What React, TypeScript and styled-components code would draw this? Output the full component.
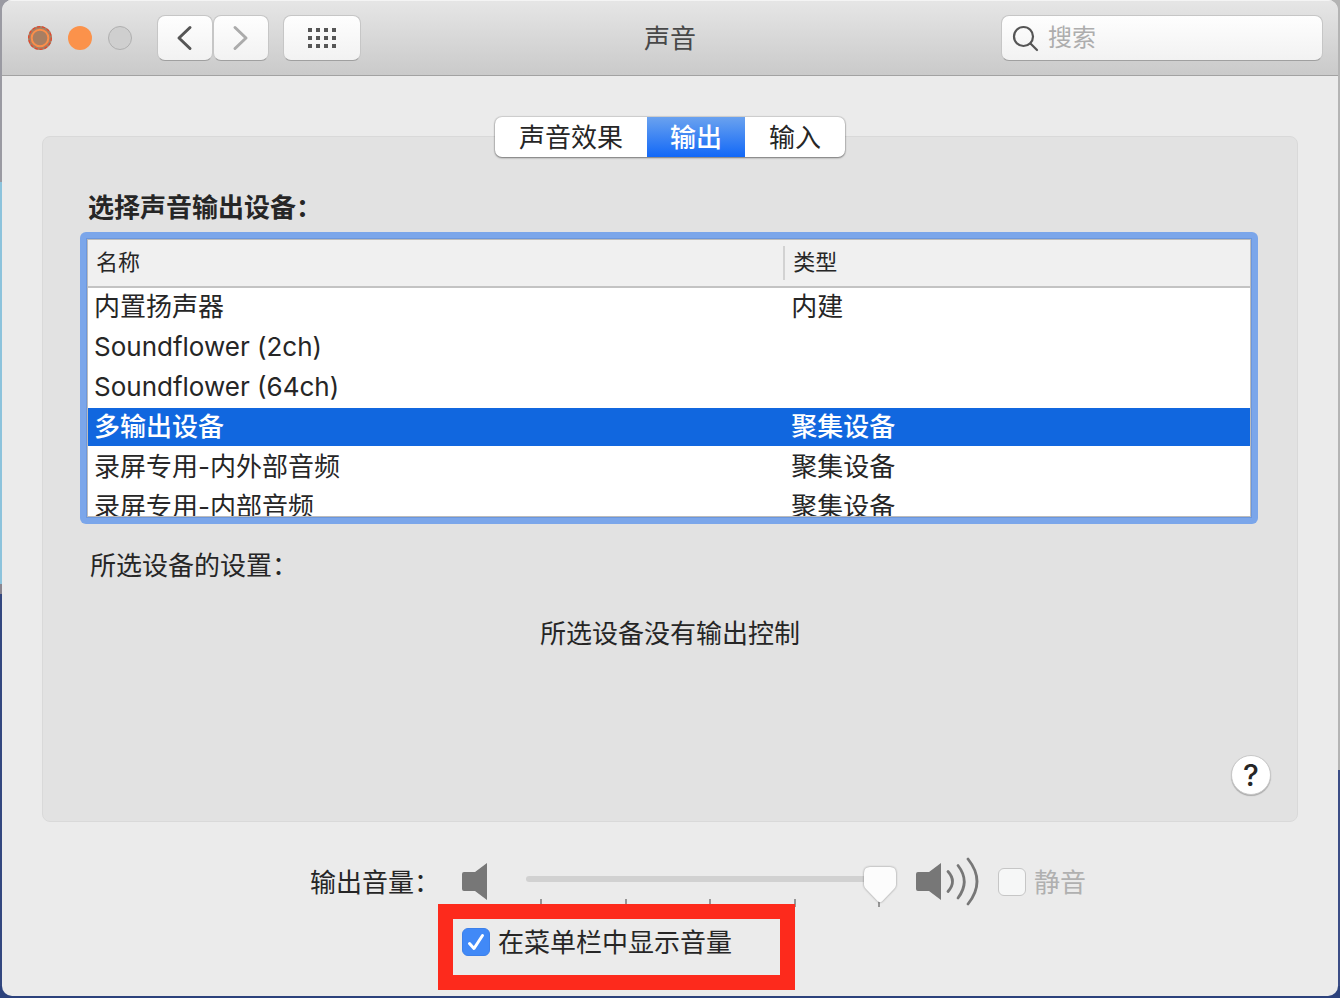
import React, { useState } from 'react';
import styled, { createGlobalStyle, css } from 'styled-components';

const GlobalStyle = createGlobalStyle`
  *, *::before, *::after { box-sizing: border-box; }
  body {
    margin: 0;
    min-height: 100vh;
    color: #262626;
    font-family: Inter, "Noto Sans CJK SC", sans-serif;
    font-size: 26px;
    line-height: 40px;
    background:
      linear-gradient(#9a9aa2 0 182px, #8cc3dc 182px 584px, #8a8690 584px 594px, #33477f 594px) left / 50% 100% no-repeat,
      linear-gradient(#b4b4b4 0 770px, #3b4d85 770px) right / 50% 100% no-repeat;
  }
  button, input { font: inherit; color: inherit; margin: 0; }
  button { padding: 0; border: 0; cursor: default; }
`;

const Desktop = styled.div`
  display: flex;
  min-height: 100vh;
  padding: 0 2px 2px;
  background: linear-gradient(#2c427c, #2c427c) bottom / 100% 12px no-repeat;
`;

const Window = styled.main`
  flex: 1;
  min-width: 0;
  display: flex;
  flex-direction: column;
  border-radius: 10px;
  background: #ebebeb;
  overflow: hidden;
`;

const TitleBar = styled.header`
  display: grid;
  grid-template-columns: 1fr auto 1fr;
  align-items: center;
  height: 76px;
  padding: 0 15px;
  background: linear-gradient(#e6e6e6, #cacaca);
  border-bottom: 1px solid #a2a2a2;
  box-shadow: inset 0 1px #f4f4f4;
`;

const Title = styled.h1`
  margin: 0;
  padding-top: 2px;
  font-size: 26px;
  font-weight: 400;
  color: #484848;
`;

const ToolGroup = styled.div`
  display: flex;
  align-items: center;
`;

const Lights = styled.div`
  display: flex;
  gap: 16px;
  margin: 0 25px 0 11px;
`;

const LightButton = styled.button`
  display: flex;
  width: 24px;
  height: 24px;
  background: none;
`;

const raised = css`
  background: linear-gradient(#fefefe, #f2f2f2);
  border: 1px solid #c6c6c6;
  border-bottom-color: #a0a0a0;
  border-radius: 8px;
`;

const ToolButton = styled.button<{ $wide?: boolean }>`
  ${raised}
  display: flex;
  align-items: center;
  justify-content: center;
  width: ${(p) => (p.$wide ? 78 : 56)}px;
  height: 46px;
  margin-left: ${(p) => (p.$wide ? 14 : 0)}px;
`;

const SearchBox = styled.label`
  ${raised}
  justify-self: end;
  display: flex;
  align-items: center;
  gap: 8px;
  width: 322px;
  max-width: 100%;
  height: 46px;
  padding: 0 10px;
`;

const SearchInput = styled.input`
  flex: 1;
  min-width: 0;
  border: 0;
  outline: 0;
  padding: 1px 0 0;
  background: none;
  font-size: 24px;
  &::placeholder { color: #adadad; opacity: 1; }
`;

const Content = styled.div`
  flex: 1;
  display: flex;
  flex-direction: column;
  padding: 41px 40px 24px;
`;

const Tabs = styled.div`
  z-index: 1;
  align-self: center;
  display: flex;
  height: 40px;
  margin-bottom: -21px;
  border-radius: 7px;
  background: #fff;
  box-shadow: 0 0 1px 1px #0000001f, 0 1px 2px #00000066;
`;

const Tab = styled.button<{ $active: boolean }>`
  padding: 1px 24px 0;
  border-radius: 7px;
  background: none;
  ${(p) =>
    p.$active &&
    css`
      padding: 1px 23px 0;
      border-radius: 0;
      color: #fff;
      font-weight: 500;
      background: linear-gradient(#6aa2ef, #1268f7);
    `}
`;

const Panel = styled.section`
  display: flex;
  flex-direction: column;
  min-height: 686px;
  padding: 51px 26px 26px 37px;
  border: 1px solid #d9d9d9;
  border-radius: 8px;
  background: #e2e2e2;
`;

const Heading = styled.h2`
  margin: 0 0 4px 8px;
  font-size: 26px;
  line-height: 40px;
  font-weight: 700;
`;

const ListFrame = styled.div`
  height: 292px;
  margin-right: 13px;
  padding: 7px;
  border-radius: 6px;
  background: #7ba6ea;
`;

const ListClip = styled.div`
  height: 100%;
  overflow: hidden;
  border: 1px solid #bcbcbc;
  outline: 1px solid #6b96dc;
  background: #fff;
`;

const DeviceTable = styled.table`
  width: 100%;
  table-layout: fixed;
  border-collapse: separate;
  border-spacing: 0;
`;

const HeadCell = styled.th<{ $divided?: boolean }>`
  width: ${(p) => (p.$divided ? '60%' : 'auto')};
  height: 48px;
  padding: 0;
  border-bottom: 2px solid #c3c3c3;
  background: #f0f0f0;
  font-size: 22px;
  font-weight: 400;
  text-align: left;
  span {
    display: block;
    padding: 0 0 2px 8px;
    line-height: 32px;
    border-right: ${(p) => (p.$divided ? '2px solid #d2d2d2' : '0')};
  }
`;

const Row = styled.tr<{ $selected: boolean }>`
  td {
    height: 40px;
    padding: 0 6px;
    border-bottom: 2px solid #fff;
    line-height: 38px;
    white-space: nowrap;
    ${(p) => p.$selected && 'background: #1167df; color: #fff; font-weight: 500;'}
  }
`;

const Caption = styled.p`
  margin: 22px 0 0 10px;
`;

const Message = styled.p`
  margin: 28px 11px 0 0;
  text-align: center;
`;

const HelpButton = styled.button`
  align-self: flex-end;
  width: 40px;
  height: 40px;
  margin-top: auto;
  border: 1px solid #c8c8c8;
  border-radius: 50%;
  background: #fff;
  box-shadow: 0 1px 1px #00000040;
  font-size: 30px;
  line-height: 38px;
  font-weight: 500;
`;

const Footer = styled.div`
  display: grid;
  grid-template-columns: auto auto;
  justify-content: center;
  align-items: center;
  column-gap: 22px;
  row-gap: 14px;
  padding: 35px 0 0 56px;
  > label { padding-top: 2px; }
`;

const VolumeRow = styled.div`
  display: flex;
  align-items: center;
  height: 50px;
`;

const SliderBox = styled.div`
  display: grid;
  width: 370px;
  height: 50px;
  margin: 0 20px 0 38px;
  align-items: start;
  > * { grid-area: 1 / 1; }
`;

const Track = styled.div`
  height: 6px;
  margin-top: 19px;
  border-radius: 3px;
  background: #d1d1d1;
`;

const Ticks = styled.div`
  display: flex;
  justify-content: space-between;
  margin-top: 42px;
  padding: 0 16px 0 14px;
  i { width: 2px; height: 8px; background: #969696; }
`;

const Slider = styled.input`
  z-index: 1;
  appearance: none;
  width: 100%;
  height: 36px;
  margin-top: 10px;
  background: none;
  outline: 0;
  filter: drop-shadow(0 0 1px #00000066);
  &::-webkit-slider-thumb {
    appearance: none;
    width: 32px;
    height: 36px;
    background: #fcfcfc;
    clip-path: path("M6 0H26Q32 0 32 6V18Q32 20 30 22L18 34.500Q16 36 14 34.500L2 22Q0 20 0 18V6Q0 0 6 0Z");
  }
`;

const CheckLabel = styled.label<{ $muted?: boolean }>`
  display: flex;
  align-items: center;
  gap: 8px;
  color: ${(p) => (p.$muted ? '#b0b0b0' : 'inherit')};
`;

const CheckText = styled.span`
  padding-top: 2px;
`;

const MuteSlot = styled.div`
  margin-left: 19px;
`;

const CheckMark = styled.span`
  display: grid;
  width: 28px;
  height: 28px;
  > * { grid-area: 1 / 1; }
  svg { pointer-events: none; }
`;

const CheckInput = styled.input`
  appearance: none;
  width: 28px;
  height: 28px;
  border: 1px solid #c6c6c6;
  border-radius: 6px;
  background: #f6f7f7;
  &:checked { background: #4189f7; border-color: #3c80ea; }
`;

const Highlighted = styled.div`
  grid-column: 2;
  justify-self: start;
  position: relative;
  &::after {
    content: "";
    position: absolute;
    inset: -17px -63px -27px -24px;
    border: 15px solid #fd2a1c;
    pointer-events: none;
    z-index: 2;
  }
`;

function CheckBox({ checked, onChange, disabled, children }: {
  checked: boolean; onChange: (v: boolean) => void; disabled?: boolean; children: React.ReactNode;
}) {
  return (
    <CheckLabel $muted={disabled}>
      <CheckMark>
        <CheckInput type="checkbox" checked={checked} disabled={disabled} onChange={(e) => onChange(e.target.checked)} />
        {checked && (
          <svg width="28" height="28" viewBox="0 0 28 28" fill="none" stroke="#fff" strokeWidth="3" strokeLinecap="round" strokeLinejoin="round">
            <path d="M7.500 15.500L12 20.500L20.500 7.500" />
          </svg>
        )}
      </CheckMark>
      <CheckText>{children}</CheckText>
    </CheckLabel>
  );
}

function Speaker({ loud }: { loud?: boolean }) {
  const w = loud ? 63 : 26;
  return (
    <svg width={w} height="50" viewBox={`0 0 ${w} 50`} fill="none" aria-hidden="true">
      <path d="M2 15H13L25 6V43L13 34H2Q0 34 0 32V17Q0 15 2 15Z" fill="#777" />
      {loud && (
        <g stroke="#777" strokeWidth="2.800" strokeLinecap="round">
          <path d="M32 14.500Q41 24.500 32 34.500" />
          <path d="M42 8.500Q54.500 24.500 42 41" />
          <path d="M52 2Q70 24.500 52 47" />
        </g>
      )}
    </svg>
  );
}

const devices = [
  ['内置扬声器', '内建'],
  ['Soundflower (2ch)', ''],
  ['Soundflower (64ch)', ''],
  ['多输出设备', '聚集设备'],
  ['录屏专用-内外部音频', '聚集设备'],
  ['录屏专用-内部音频', '聚集设备'],
];

const tabs = ['声音效果', '输出', '输入'];

export default function App() {
  const [tab, setTab] = useState(1);
  const [selected, setSelected] = useState(3);
  const [volume, setVolume] = useState(100);
  const [shown, setShown] = useState(true);
  const [muted, setMuted] = useState(false);

  return (
    <>
      <GlobalStyle />
      <Desktop>
        <Window>
          <TitleBar>
            <ToolGroup>
              <Lights>
                <LightButton aria-label="关闭">
                  <svg width="24" height="24" viewBox="0 0 24 24">
                    <circle cx="12" cy="12" r="12" fill="#a87e62" />
                    <circle cx="12" cy="12" r="11.300" fill="none" stroke="#e8432a" strokeWidth="1.200" strokeDasharray="3 2" />
                    <circle cx="12" cy="12" r="8.300" fill="none" stroke="#fb8e4a" strokeWidth="2" />
                  </svg>
                </LightButton>
                <LightButton aria-label="最小化">
                  <svg width="24" height="24" viewBox="0 0 24 24"><circle cx="12" cy="12" r="12" fill="#fb924b" /></svg>
                </LightButton>
                <LightButton aria-label="缩放">
                  <svg width="24" height="24" viewBox="0 0 24 24"><circle cx="12" cy="12" r="11.500" fill="#cfcfcf" stroke="#afafaf" /></svg>
                </LightButton>
              </Lights>
              <ToolButton aria-label="后退">
                <svg width="28" height="28" viewBox="0 0 28 28" fill="none" stroke="#555" strokeWidth="3" strokeLinecap="round" strokeLinejoin="round"><path d="M19 3.500L8 14L19 24.500" /></svg>
              </ToolButton>
              <ToolButton aria-label="前进">
                <svg width="28" height="28" viewBox="0 0 28 28" fill="none" stroke="#ababab" strokeWidth="3" strokeLinecap="round" strokeLinejoin="round"><path d="M8 3.500L19 14L8 24.500" /></svg>
              </ToolButton>
              <ToolButton $wide aria-label="全部显示">
                <svg width="28" height="20" viewBox="0 0 28 20" fill="#565656">
                  {[0, 8, 16].map((y) => [0, 8, 16, 24].map((x) => <rect key={`${x}-${y}`} x={x} y={y} width="4" height="4" />))}
                </svg>
              </ToolButton>
            </ToolGroup>
            <Title>声音</Title>
            <SearchBox>
              <svg width="28" height="28" viewBox="0 0 28 28" fill="none" stroke="#555" strokeWidth="2.200" strokeLinecap="round">
                <circle cx="11.500" cy="12.500" r="9.500" /><path d="M18.500 19.500L25 26" />
              </svg>
              <SearchInput type="text" placeholder="搜索" aria-label="搜索" />
            </SearchBox>
          </TitleBar>
          <Content>
            <Tabs role="tablist">
              {tabs.map((name, i) => (
                <Tab key={name} role="tab" aria-selected={i === tab} $active={i === tab} onClick={() => setTab(i)}>{name}</Tab>
              ))}
            </Tabs>
            <Panel>
              <Heading>选择声音输出设备：</Heading>
              <ListFrame>
                <ListClip>
                  <DeviceTable>
                    <thead>
                      <tr>
                        <HeadCell $divided><span>名称</span></HeadCell>
                        <HeadCell><span>类型</span></HeadCell>
                      </tr>
                    </thead>
                    <tbody>
                      {devices.map(([name, kind], i) => (
                        <Row key={name} $selected={i === selected} onClick={() => setSelected(i)}>
                          <td>{name}</td>
                          <td>{kind}</td>
                        </Row>
                      ))}
                    </tbody>
                  </DeviceTable>
                </ListClip>
              </ListFrame>
              <Caption>所选设备的设置：</Caption>
              <Message>所选设备没有输出控制</Message>
              <HelpButton aria-label="帮助">?</HelpButton>
            </Panel>
            <Footer>
              <label htmlFor="volume">输出音量：</label>
              <VolumeRow>
                <Speaker />
                <SliderBox>
                  <Track />
                  <Ticks><i /><i /><i /><i /><i /></Ticks>
                  <Slider id="volume" type="range" min={0} max={100} value={volume} onChange={(e) => setVolume(Number(e.target.value))} />
                </SliderBox>
                <Speaker loud />
                <MuteSlot>
                  <CheckBox checked={muted} onChange={setMuted} disabled>静音</CheckBox>
                </MuteSlot>
              </VolumeRow>
              <Highlighted>
                <CheckBox checked={shown} onChange={setShown}>在菜单栏中显示音量</CheckBox>
              </Highlighted>
            </Footer>
          </Content>
        </Window>
      </Desktop>
    </>
  );
}
